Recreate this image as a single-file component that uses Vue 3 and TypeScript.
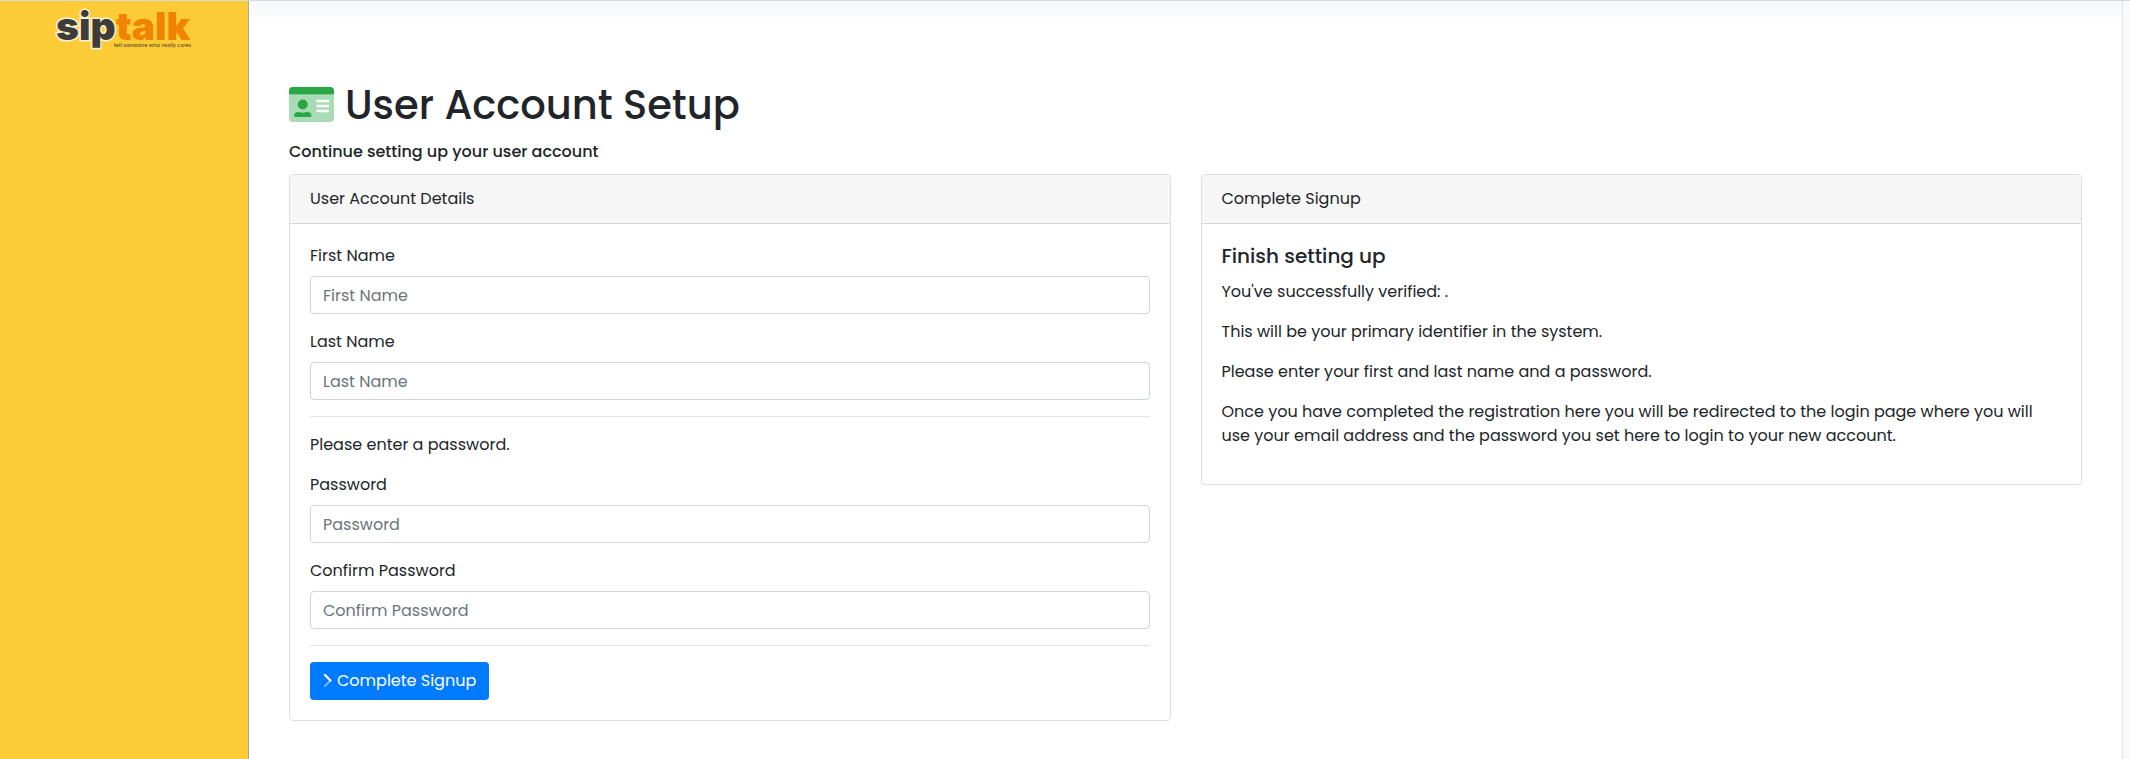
<script setup lang="ts">
import { reactive } from 'vue'

interface Field {
  id: 'firstName' | 'lastName' | 'password' | 'confirmPassword'
  label: string
  type: 'text' | 'password'
}

const nameFields: Field[] = [
  { id: 'firstName', label: 'First Name', type: 'text' },
  { id: 'lastName', label: 'Last Name', type: 'text' },
]

const passwordFields: Field[] = [
  { id: 'password', label: 'Password', type: 'password' },
  { id: 'confirmPassword', label: 'Confirm Password', type: 'password' },
]

const form = reactive({ firstName: '', lastName: '', password: '', confirmPassword: '' })
</script>

<template>
  <div class="page">
    <aside class="sidebar">
      <a class="brand" href="#" aria-label="siptalk">
        <svg class="logo" width="140" height="44" viewBox="0 0 140 44" aria-hidden="true">
          <text class="logo-talk" x="62" y="34">talk</text>
          <text class="logo-sip" x="2" y="34">sip</text>
          <text class="logo-tag" x="137" y="41" text-anchor="end">tell someone who really cares</text>
        </svg>
      </a>
    </aside>

    <div class="content">
      <div class="topbar"></div>
      <main class="main">
        <h1 class="title">
          <svg class="title-icon" width="45" height="37" viewBox="0 32 576 474" aria-hidden="true">
            <path
              fill="#a9dcb5"
              d="M0 128h576v304a48 48 0 0 1-48 48H48a48 48 0 0 1-48-48z"
            />
            <path fill="#28a745" d="M528 32H48A48 48 0 0 0 0 80v48h576V80a48 48 0 0 0-48-48z" />
            <circle fill="#28a745" cx="176" cy="256" r="64" />
            <path
              fill="#28a745"
              d="M234 352h-11c-29 14-65 14-94 0h-11c-30 0-54 19-54 44 0 11 10 20 22 20h180c12 0 22-9 22-20 0-25-24-44-54-44z"
            />
            <g fill="#fff">
              <rect x="352" y="196" width="160" height="32" rx="8" />
              <rect x="352" y="260" width="160" height="32" rx="8" />
              <rect x="352" y="324" width="160" height="32" rx="8" />
            </g>
          </svg>
          <span>User Account Setup</span>
        </h1>
        <p class="subtitle">Continue setting up your user account</p>

        <div class="columns">
          <section class="card">
            <header class="card-header">User Account Details</header>
            <form class="card-body" @submit.prevent>
              <div v-for="field in nameFields" :key="field.id" class="field">
                <label :for="field.id">{{ field.label }}</label>
                <input :id="field.id" v-model="form[field.id]" :type="field.type" :placeholder="field.label" />
              </div>
              <hr />
              <p>Please enter a password.</p>
              <div v-for="field in passwordFields" :key="field.id" class="field">
                <label :for="field.id">{{ field.label }}</label>
                <input :id="field.id" v-model="form[field.id]" :type="field.type" :placeholder="field.label" />
              </div>
              <hr />
              <button class="submit" type="submit">
                <svg width="10" height="16" viewBox="0 0 10 16" fill="none" stroke="#fff" stroke-width="2" aria-hidden="true">
                  <path d="M2 13 7 8" stroke-opacity="0.45" stroke-linecap="round" />
                  <path d="M2 2 7.5 7.5" stroke-width="2.4" stroke-linecap="round" />
                </svg>
                <span>Complete Signup</span>
              </button>
            </form>
          </section>

          <section class="card">
            <header class="card-header">Complete Signup</header>
            <div class="card-body">
              <h2 class="card-title">Finish setting up</h2>
              <p>You've successfully verified: .</p>
              <p>This will be your primary identifier in the system.</p>
              <p>Please enter your first and last name and a password.</p>
              <p>
                Once you have completed the registration here you will be redirected to the login page where you will
                use your email address and the password you set here to login to your new account.
              </p>
            </div>
          </section>
        </div>
      </main>
    </div>
    <div class="gutter"></div>
  </div>
</template>

<style>
body {
  margin: 0;
  background: #fff;
}
</style>

<style scoped>
*,
*::before,
*::after {
  box-sizing: border-box;
}

.page {
  display: flex;
  min-height: 100vh;
  border-top: 1px solid #dadada;
  color: #212529;
  font-family: Poppins, Inter, 'Liberation Sans', sans-serif;
  font-size: 16px;
  line-height: 24px;
}

.sidebar {
  flex: 0 0 249px;
  border-right: 1px solid #a5a5a5;
  background: #fbcb38;
}

.brand {
  display: flex;
  justify-content: center;
  padding-top: 5px;
}

.logo {
  display: block;
  overflow: visible;
}

.logo text {
  font-family: Inter, 'Liberation Sans', sans-serif;
}

.logo .logo-sip,
.logo .logo-talk {
  font-size: 39px;
  font-weight: 900;
}

.logo .logo-sip {
  fill: #3f3b38;
  stroke: #fdf3d4;
  stroke-width: 3px;
  paint-order: stroke;
}

.logo .logo-talk {
  fill: #f08300;
}

.logo .logo-tag {
  fill: #5a4220;
  font-family: Lato, 'Liberation Sans', sans-serif;
  font-size: 6px;
}

.content {
  flex: 1;
  min-width: 0;
}

.topbar {
  height: 16px;
  background: #f8f9fb;
}

.main {
  padding: 64px 40px 32px;
}

.title {
  display: flex;
  align-items: center;
  gap: 11px;
  margin: 0 0 11px;
  font-size: 40px;
  font-weight: 500;
  line-height: 48px;
}

.title-icon {
  flex: none;
}

.subtitle {
  margin: 0 0 10px;
  font-weight: 500;
}

.columns {
  display: grid;
  grid-template-columns: 1fr 1fr;
  align-items: start;
  gap: 30px;
}

.card {
  border: 1px solid #dfdfdf;
  border-radius: 4px;
  background: #fff;
  overflow: hidden;
}

.card-header {
  padding: 12px 20px;
  border-bottom: 1px solid #d8d8d8;
  background: #f7f7f7;
}

.card-body {
  padding: 20px;
}

.card-title {
  margin: 0 0 12px;
  font-size: 20px;
  font-weight: 500;
  line-height: 24px;
}

p {
  margin: 0 0 16px;
}

.field {
  margin-bottom: 16px;
}

label {
  display: block;
  margin-bottom: 8px;
}

input {
  display: block;
  width: 100%;
  height: 38px;
  padding: 6px 12px;
  border: 1px solid #ced4da;
  border-radius: 4px;
  background: #fff;
  color: #495057;
  font: inherit;
}

input::placeholder {
  color: #6c757d;
  opacity: 1;
}

hr {
  height: 1px;
  margin: 16px 0;
  border: 0;
  background: #e3e4e4;
}

.submit {
  display: flex;
  align-items: center;
  gap: 4px;
  height: 38px;
  padding: 0 13px;
  border: 0;
  border-radius: 4px;
  background: #007bff;
  color: #fff;
  font: inherit;
  cursor: pointer;
}

.gutter {
  flex: 0 0 8px;
  border-left: 1px solid #e3e3e3;
  background: #fafafa;
}
</style>
